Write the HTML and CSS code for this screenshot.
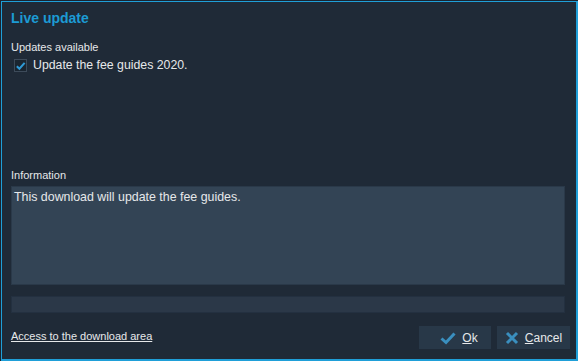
FILE: index.html
```html
<!DOCTYPE html>
<html>
<head>
<meta charset="utf-8">
<link rel="stylesheet" href="styles.css">
</head>
<body>
<div class="window">
  <div class="title">Live update</div>
  <div class="label">Updates available</div>
  <div class="check-row">
    <span class="checkbox">
      <svg width="12" height="12" viewBox="0 0 12 12"><path d="M2 6.2 L4.8 9 L10.5 2.5" fill="none" stroke="#2f9ad6" stroke-width="2.2"/></svg>
    </span>
    <span class="check-text">Update the fee guides 2020.</span>
  </div>
  <div class="spacer"></div>
  <div class="label">Information</div>
  <div class="info">This download will update the fee guides.</div>
  <div class="progress"></div>
  <div class="footer">
    <a class="link" href="#">Access to the download area</a>
    <div class="buttons">
      <button class="btn ok">
        <svg width="16" height="14" viewBox="0 0 16 14"><path d="M1.5 7.5 L6 11.5 L14.5 2.5" fill="none" stroke="#3a8fbf" stroke-width="3"/></svg>
        <span><u>O</u>k</span>
      </button>
      <button class="btn cancel">
        <svg width="14" height="14" viewBox="0 0 14 14"><path d="M2 2 L12 12 M12 2 L2 12" fill="none" stroke="#3a8fbf" stroke-width="3"/></svg>
        <span><u>C</u>ancel</span>
      </button>
    </div>
  </div>
</div>
</body>
</html>
```
FILE: styles.css
```css
html, body {
  margin: 0;
  padding: 0;
  background: #1a2430;
}
body {
  width: 578px;
  height: 361px;
  overflow: hidden;
  font-family: "Liberation Sans", Arial, sans-serif;
  font-size: 12px;
  color: #e6e8ea;
}
.window {
  box-sizing: border-box;
  margin: 1px 0 0 1px;
  width: 577px;
  height: 360px;
  background: #1f2a37;
  border-style: solid;
  border-color: #1f9fd8;
  border-width: 1px 2px 2px 1px;
  padding: 0 11px 0 9px;
  display: flex;
  flex-direction: column;
}
.title {
  color: #1c9bd4;
  font-weight: bold;
  font-size: 14px;
  margin-top: 8px;
  height: 16px;
  line-height: 16px;
}
.label {
  font-size: 11px;
  height: 14px;
  line-height: 14px;
}
.title + .label {
  margin-top: 14px;
}
.check-row {
  display: flex;
  align-items: center;
  margin-top: 4px;
  margin-left: 3px;
  height: 15px;
}
.checkbox {
  width: 13px;
  height: 13px;
  box-sizing: border-box;
  border: 1px solid #3d4b5a;
  background: #1a2530;
  display: flex;
  align-items: center;
  justify-content: center;
}
.check-text {
  margin-left: 6px;
  line-height: 15px;
  font-size: 12.3px;
}
.spacer {
  height: 95px;
}
.info {
  margin-top: 4px;
  height: 99px;
  box-sizing: border-box;
  background: #334455;
  border: 1px solid #2a3949;
  padding: 3px 2px;
  line-height: 14px;
  font-size: 12.4px;
}
.progress {
  margin-top: 11px;
  height: 17px;
  box-sizing: border-box;
  background: #2b3848;
  border: 1px solid #233040;
}
.footer {
  display: flex;
  justify-content: space-between;
  align-items: flex-start;
  margin-top: 13px;
  margin-right: -5px;
}
.link {
  color: #e6e8ea;
  text-decoration: underline;
  line-height: 14px;
  font-size: 11px;
  margin-top: 3px;
}
.buttons {
  display: flex;
  gap: 6px;
}
.btn {
  height: 23px;
  width: 73px;
  border: none;
  background: #283848;
  color: #e6e8ea;
  font-family: "Liberation Sans", Arial, sans-serif;
  font-size: 12px;
  display: flex;
  align-items: center;
  justify-content: center;
  gap: 6px;
  padding: 0;
}
.btn.ok {
  width: 72px;
}
.btn.ok svg {
  margin-left: 8px;
}
.btn u {
  text-decoration: underline;
}
```
